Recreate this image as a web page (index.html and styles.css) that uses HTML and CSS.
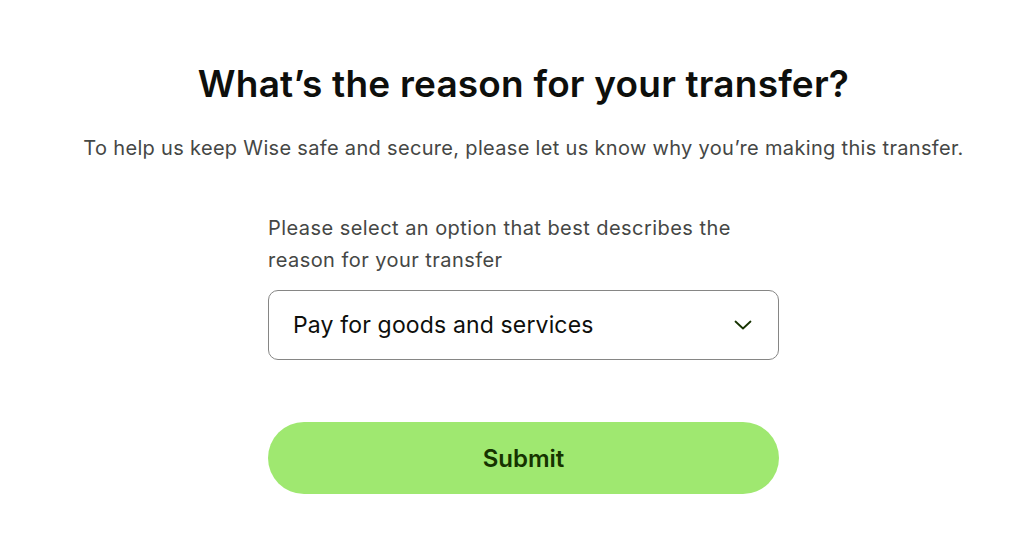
FILE: index.html
```html
<!DOCTYPE html>
<html lang="en">
<head>
  <meta charset="UTF-8" />
  <meta name="viewport" content="width=device-width, initial-scale=1.0"/>
  <title>Transfer reason</title>
  <link rel="stylesheet" href="styles.css">
</head>
<body>
  <div class="page">
    <h1>What’s the reason for your transfer?</h1>
    <p class="intro">To help us keep Wise safe and secure, please let us know why you’re making this transfer.</p>

    <form class="form">
      <label class="label" for="reason">Please select an option that best describes the reason for your transfer</label>
      <div class="select">
        <span id="reason">Pay for goods and services</span>
        <svg class="chevron" width="18" height="10" viewBox="0 0 18 10" fill="none">
          <path d="M1.5 1.5 L9 8.5 L16.5 1.5" stroke="#163300" stroke-width="1.8" stroke-linecap="round" stroke-linejoin="round"/>
        </svg>
      </div>
      <button type="button" class="submit">Submit</button>
    </form>
  </div>
</body>
</html>
```

FILE: styles.css
```css
* {
  box-sizing: border-box;
}

body {
  margin: 0;
  font-family: Inter, 'Noto Sans', sans-serif;
  background: #fff;
  color: #0e0f0c;
}

.page {
  padding: 58px 0 0 23px;
  display: flex;
  flex-direction: column;
  align-items: center;
}

h1 {
  margin: 0;
  font-size: 37px;
  font-weight: 600;
  letter-spacing: 0.2px;
  line-height: 52px;
}

.intro {
  margin: 24px 0 0;
  font-size: 20px;
  line-height: 28px;
  letter-spacing: 0.32px;
  color: #454745;
}

.form {
  width: 511px;
  margin-top: 50px;
  display: flex;
  flex-direction: column;
}

.label {
  font-size: 20px;
  line-height: 32px;
  letter-spacing: 0.45px;
  color: #454745;
  padding-right: 30px;
}

.select {
  margin-top: 14px;
  height: 70px;
  border: 1px solid #868685;
  border-radius: 10px;
  padding: 0 26px 0 24px;
  display: flex;
  align-items: center;
  justify-content: space-between;
  font-size: 23px;
  letter-spacing: 0.15px;
}

.submit {
  margin-top: 62px;
  height: 72px;
  border: none;
  border-radius: 36px;
  background: #9fe870;
  color: #163300;
  font-family: inherit;
  font-size: 24px;
  font-weight: 600;
  cursor: pointer;
}
```
